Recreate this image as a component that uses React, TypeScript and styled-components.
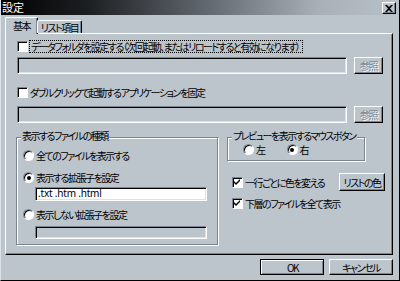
import React from 'react';
import styled, { createGlobalStyle, css } from 'styled-components';

const c = {
	face: '#bcc4cc',
	shadow: '#7c8490',
	light: '#ffffff',
	soft: '#dde2e7',
	dark: '#000000',
};

const jp = css`
	font-size: 10px;
	letter-spacing: -1.5px;
	font-feature-settings: 'palt';
	white-space: nowrap;
`;

const GlobalStyle = createGlobalStyle`
	html, body {
		margin: 0;
		padding: 0;
		background: ${c.face};
	}
	body {
		font-family: "Noto Sans CJK JP", "Noto Sans", sans-serif;
		font-size: 10px;
		color: #000;
	}
`;

const WindowUI = styled.div`
	width: 400px;
	height: 281px;
	box-sizing: border-box;
	background: ${c.face};
	border-left: 1px solid ${c.soft};
	border-right: 1px solid ${c.dark};
	border-bottom: 1px solid ${c.dark};
	display: flex;
	flex-direction: column;
	overflow: hidden;
`;

const TitleBarUI = styled.div`
	height: 15px;
	margin-left: -1px;
	display: flex;
	align-items: center;
	justify-content: space-between;
	padding: 0 2px;
	background: linear-gradient(90deg, #000 0%, #1c1f22 22%, #6a7078 55%, #a9b0b8 80%, #b8c0c8 100%);
	color: #fff;
	font-size: 11px;
	line-height: 13px;
`;

const CloseUI = styled.div`
	width: 12px;
	height: 10px;
	margin: 1px 1px 0 0;
	background: ${c.face};
	border: 1px solid;
	border-color: ${c.light} ${c.dark} ${c.dark} ${c.light};
	box-shadow: inset -1px -1px 0 ${c.shadow};
	display: flex;
	align-items: center;
	justify-content: center;
`;

const BodyUI = styled.div`
	padding: 2px 0 0 4px;
	display: flex;
	flex-direction: column;
`;

const TabStripUI = styled.div`
	display: flex;
	align-items: flex-end;
	height: 16px;
	position: relative;
	z-index: 1;
`;

const TabUI = styled.div<{ $active?: boolean }>`
	${jp};
	box-sizing: border-box;
	background: ${c.face};
	border-top: 1px solid ${c.light};
	border-left: 1px solid ${c.light};
	border-right: 1px solid ${c.dark};
	box-shadow: inset -1px 0 0 ${c.shadow};
	border-radius: 2px 2px 0 0;
	display: flex;
	align-items: center;
	justify-content: center;
	${(p) =>
		p.$active
			? css`
					width: 33px;
					height: 17px;
					margin-bottom: -1px;
					padding-bottom: 2px;
			  `
			: css`
					width: 45px;
					height: 13px;
					margin-left: -1px;
			  `}
`;

const PanelUI = styled.div`
	box-sizing: border-box;
	width: 388px;
	height: 222px;
	background: ${c.face};
	border-top: 1px solid ${c.light};
	border-left: 1px solid ${c.light};
	border-right: 1px solid ${c.dark};
	border-bottom: 1px solid ${c.dark};
	box-shadow: inset -1px -1px 0 ${c.shadow};
	padding: 6px 0 0 11px;
	display: flex;
	flex-direction: column;
`;

const TextUI = styled.span<{ $focus?: boolean }>`
	${jp};
	line-height: 11px;
	${(p) =>
		p.$focus &&
		css`
			outline: 1px dotted #000;
			padding: 0 3px 0 1px;
		`}
`;

const CheckRowUI = styled.label<{ $top?: number; $indent?: number }>`
	display: flex;
	align-items: center;
	gap: 2px;
	height: 13px;
	margin-top: ${(p) => p.$top ?? 0}px;
	padding-left: ${(p) => p.$indent ?? 0}px;
`;

const sunken = css`
	box-sizing: border-box;
	border: 1px solid;
	border-color: ${c.shadow} ${c.light} ${c.light} ${c.shadow};
	box-shadow: inset 1px 1px 0 ${c.dark};
`;

const CheckBoxUI = styled.span`
	${sunken};
	width: 11px;
	height: 11px;
	flex: none;
	background: #fff;
	display: flex;
	align-items: center;
	justify-content: center;
`;

const RadioUI = styled.span`
	${sunken};
	width: 11px;
	height: 11px;
	flex: none;
	border-radius: 50%;
	background: #fff;
	display: flex;
	align-items: center;
	justify-content: center;
`;

const DotUI = styled.span`
	width: 4px;
	height: 4px;
	border-radius: 50%;
	background: #000;
`;

const FieldRowUI = styled.div<{ $top: number }>`
	display: flex;
	align-items: center;
	gap: 7px;
	margin-top: ${(p) => p.$top}px;
`;

const InputUI = styled.div<{ $width: number; $height: number; $enabled?: boolean }>`
	${sunken};
	width: ${(p) => p.$width}px;
	height: ${(p) => p.$height}px;
	background: ${(p) => (p.$enabled ? '#fff' : c.face)};
	box-shadow: inset 1px 1px 0 ${c.dark}, inset -1px -1px 0 ${c.soft};
	padding: 0 2px;
	font-family: "Noto Sans", sans-serif;
	font-size: 10px;
	line-height: 11px;
	letter-spacing: -0.2px;
`;

const ButtonUI = styled.div<{ $width: number; $height: number; $disabled?: boolean; $default?: boolean }>`
	${jp};
	box-sizing: border-box;
	width: ${(p) => p.$width}px;
	height: ${(p) => p.$height}px;
	background: ${c.face};
	border: 1px solid;
	border-color: ${c.light} ${c.dark} ${c.dark} ${c.light};
	box-shadow: inset -1px -1px 0 ${c.shadow};
	display: flex;
	align-items: center;
	justify-content: center;
	${(p) =>
		p.$disabled &&
		css`
			color: ${c.shadow};
			text-shadow: 1px 1px 0 ${c.light};
		`}
	${(p) =>
		p.$default &&
		css`
			outline: 1px solid ${c.dark};
			outline-offset: -1px;
			border-width: 2px 1px 1px 2px;
		`}
`;

const LowerUI = styled.div`
	display: flex;
	margin-top: 14px;
	margin-left: -1px;
`;

const GroupUI = styled.div<{ $width: number; $height: number }>`
	position: relative;
	box-sizing: border-box;
	width: ${(p) => p.$width}px;
	height: ${(p) => p.$height}px;
	border: 1px solid ${c.shadow};
	box-shadow: inset 1px 1px 0 ${c.light}, 1px 1px 0 ${c.light};
`;

const LegendUI = styled.span`
	${jp};
	position: absolute;
	top: -8px;
	left: 4px;
	padding: 0 1px;
	background: ${c.face};
	line-height: 11px;
`;

const FileGroupBodyUI = styled.div`
	display: flex;
	flex-direction: column;
	padding: 11px 0 0 6px;
`;

const RadioRowUI = styled.label<{ $top?: number; $height?: number }>`
	display: flex;
	align-items: center;
	gap: 2px;
	height: ${(p) => p.$height ?? 13}px;
	margin-top: ${(p) => p.$top ?? 0}px;
`;

const SubInputUI = styled.div<{ $top: number }>`
	margin: ${(p) => p.$top}px 0 0 12px;
`;

const RightColUI = styled.div`
	display: flex;
	flex-direction: column;
	margin-left: 9px;
`;

const PreviewBodyUI = styled.div`
	display: flex;
	align-items: center;
	padding: 6px 0 0 15px;
	gap: 22px;
`;

const OptionRowUI = styled.div`
	display: flex;
	align-items: center;
	justify-content: space-between;
	width: 158px;
	height: 18px;
	margin-top: 12px;
	padding-left: 5px;
	box-sizing: border-box;
`;

const FooterUI = styled.div`
	display: flex;
	justify-content: flex-end;
	gap: 5px;
	padding: 4px 6px 0 0;
`;

const Check = ({ checked }: { checked?: boolean }) => (
	<CheckBoxUI>
		{checked && (
			<svg width='7' height='7' viewBox='0 0 7 7'>
				<path d='M0 2 L2 4 L6 0 L6 2 L2 6 L0 4 Z' fill='#000' />
			</svg>
		)}
	</CheckBoxUI>
);

const Radio = ({ checked }: { checked?: boolean }) => <RadioUI>{checked && <DotUI />}</RadioUI>;

const App = () => (
	<>
		<GlobalStyle />
		<WindowUI>
			<TitleBarUI>
				<span>設定</span>
				<CloseUI>
					<svg width='8' height='7' viewBox='0 0 8 7'>
						<path d='M0 0 L2 0 L4 2 L6 0 L8 0 L5 3.5 L8 7 L6 7 L4 5 L2 7 L0 7 L3 3.5 Z' fill='#000' />
					</svg>
				</CloseUI>
			</TitleBarUI>
			<BodyUI>
				<TabStripUI>
					<TabUI $active>基本</TabUI>
					<TabUI>リスト項目</TabUI>
				</TabStripUI>
				<PanelUI>
					<CheckRowUI>
						<Check />
						<TextUI $focus>データフォルダを設定する（次回起動、またはリロードすると有効になります）</TextUI>
					</CheckRowUI>
					<FieldRowUI $top={4}>
						<InputUI $width={330} $height={17} />
						<ButtonUI $width={29} $height={17} $disabled>
							参照
						</ButtonUI>
					</FieldRowUI>
					<CheckRowUI $top={12}>
						<Check />
						<TextUI>ダブルクリックで起動するアプリケーションを固定</TextUI>
					</CheckRowUI>
					<FieldRowUI $top={7}>
						<InputUI $width={330} $height={17} />
						<ButtonUI $width={29} $height={17} $disabled>
							参照
						</ButtonUI>
					</FieldRowUI>
					<LowerUI>
						<GroupUI $width={202} $height={108}>
							<LegendUI>表示するファイルの種類</LegendUI>
							<FileGroupBodyUI>
								<RadioRowUI>
									<Radio />
									<TextUI>全てのファイルを表示する</TextUI>
								</RadioRowUI>
								<RadioRowUI $top={9}>
									<Radio checked />
									<TextUI>表示する拡張子を設定</TextUI>
								</RadioRowUI>
								<SubInputUI $top={3}>
									<InputUI $width={172} $height={14} $enabled>
										.txt .htm .html
									</InputUI>
								</SubInputUI>
								<RadioRowUI $top={7}>
									<Radio />
									<TextUI>表示しない拡張子を設定</TextUI>
								</RadioRowUI>
								<SubInputUI $top={5}>
									<InputUI $width={172} $height={13} />
								</SubInputUI>
							</FileGroupBodyUI>
						</GroupUI>
						<RightColUI>
							<GroupUI $width={138} $height={24}>
								<LegendUI>プレビューを表示するマウスボタン</LegendUI>
								<PreviewBodyUI>
									<RadioRowUI $height={11}>
										<Radio />
										<TextUI>左</TextUI>
									</RadioRowUI>
									<RadioRowUI $height={11}>
										<Radio checked />
										<TextUI>右</TextUI>
									</RadioRowUI>
								</PreviewBodyUI>
							</GroupUI>
							<OptionRowUI>
								<CheckRowUI>
									<Check checked />
									<TextUI>一行ごとに色を変える</TextUI>
								</CheckRowUI>
								<ButtonUI $width={46} $height={18}>
									リストの色
								</ButtonUI>
							</OptionRowUI>
							<CheckRowUI $top={6} $indent={5}>
								<Check checked />
								<TextUI>下層のファイルを全て表示</TextUI>
							</CheckRowUI>
						</RightColUI>
					</LowerUI>
				</PanelUI>
				<FooterUI>
					<ButtonUI $width={64} $height={16} $default>
						OK
					</ButtonUI>
					<ButtonUI $width={64} $height={16}>
						キャンセル
					</ButtonUI>
				</FooterUI>
			</BodyUI>
		</WindowUI>
	</>
);

export default App;
